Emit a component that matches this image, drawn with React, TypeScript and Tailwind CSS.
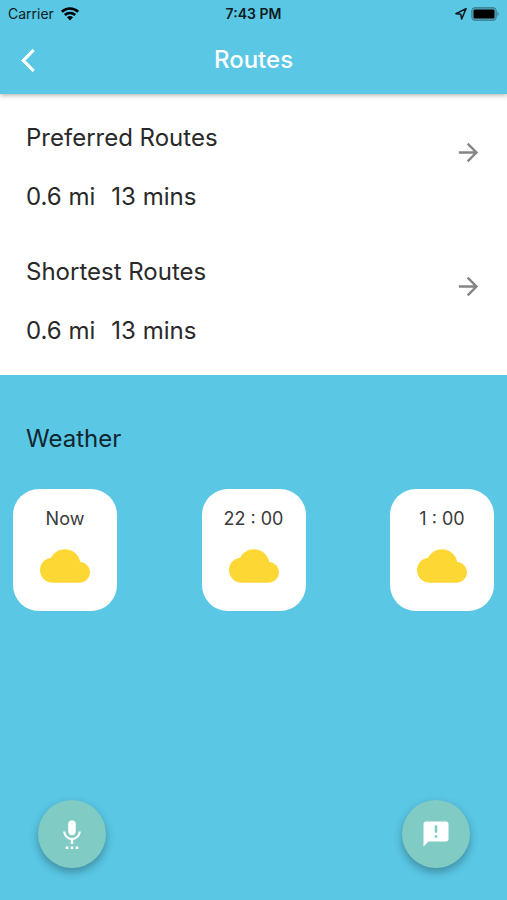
import React from "react";

const routes = [
  { name: "Preferred Routes", distance: "0.6 mi", time: "13 mins" },
  { name: "Shortest Routes", distance: "0.6 mi", time: "13 mins" },
];

const forecast = ["Now", "22 : 00", "1 : 00"];

function StatusBar() {
  return (
    <div className="grid h-7 grid-cols-3 items-center px-2 text-[#0b1c22]">
      <div className="flex items-center gap-1.5 text-sm">
        <span>Carrier</span>
        <svg className="h-3.5 w-5" viewBox="0 0 20 14" fill="none" aria-label="Wi-Fi">
          <path d="M1.8 4.8C6.500 .300 13.500 .300 18.200 4.800" stroke="#000" strokeWidth="2.600" />
          <path d="M4.800 8C7.700 5.300 12.300 5.300 15.200 8" stroke="#000" strokeWidth="2.500" />
          <path d="M7 10.300c1.700-1.600 4.300-1.600 6 0L10 13.400z" fill="#000" />
        </svg>
      </div>
      <div className="text-center text-sm font-semibold">7:43 PM</div>
      <div className="flex items-center justify-end gap-1">
        <svg className="h-3.5 w-3.5" viewBox="0 0 14 14" fill="none" aria-label="Location">
          <path
            d="M13 1.800 3 6.600l4.800.7.9 4.700z"
            stroke="#0b1c22"
            strokeWidth="1.600"
            strokeLinejoin="round"
          />
        </svg>
        <svg className="h-3.5 w-7" viewBox="0 0 28 14" aria-label="Battery">
          <rect x=".8" y=".8" width="24.400" height="12.400" rx="3.600" fill="#55a9c0" stroke="#3f8699" strokeWidth="1.400" />
          <rect x="2.500" y="2.600" width="21" height="8.800" rx="1.500" fill="#000" />
          <path d="M26.400 4.800c1.700.7 1.700 3.700 0 4.400z" fill="#3f8699" />
        </svg>
      </div>
    </div>
  );
}

function Header() {
  return (
    <header className="relative z-10 bg-[#5ac7e5] pb-0.5 shadow-[0_1px_5px_rgba(0,0,0,0.35)]">
      <StatusBar />
      <div className="grid h-16 grid-cols-[1fr_auto_1fr] items-center px-[21px]">
        <button type="button" aria-label="Back" className="w-fit text-white">
          <svg className="block h-[29px] w-3.5" viewBox="0 0 12 24" fill="currentColor">
            <path
              d="M11.400 3.870 9.900 2.400 .5 12l9.400 9.600 1.500-1.470L3.540 12z"
              stroke="currentColor"
              strokeWidth=".8"
            />
          </svg>
        </button>
        <h1 className="text-2xl font-medium text-white">Routes</h1>
      </div>
    </header>
  );
}

export default function App() {
  return (
    <div className="flex min-h-screen flex-col bg-[#5ac7e5] font-['Inter',sans-serif] text-[#292929]">
      <Header />
      <main>
        <section className="bg-white pt-[7px] pb-1.5">
          {routes.map((route) => (
            <button
              key={route.name}
              type="button"
              className="flex h-[134px] w-full items-start justify-between py-[21px] pr-6 pl-[26px] text-left text-2xl"
            >
              <span className="flex flex-col gap-[27px]">
                <span>{route.name}</span>
                <span className="flex gap-4">
                  <span>{route.distance}</span>
                  <span>{route.time}</span>
                </span>
              </span>
              <svg className="mt-4 size-[29px] text-[#858585]" viewBox="0 0 24 24" fill="currentColor">
                <path d="m12 4-1.410 1.410L16.170 11H4v2h12.170l-5.580 5.590L12 20l8-8z" />
              </svg>
            </button>
          ))}
        </section>
        <section className="pt-12">
          <h2 className="px-[26px] text-2xl text-[#10262e]">Weather</h2>
          <ul className="mt-[34px] flex justify-between px-[13px]">
            {forecast.map((label) => (
              <li
                key={label}
                className="flex w-[104px] flex-col items-center gap-2.5 rounded-[26px] bg-white pt-[18px] pb-5"
              >
                <span className="text-lg leading-6 text-[#3a3a3a]">{label}</span>
                <svg className="h-[50px] w-[50px]" viewBox="0 0 24 24" fill="#fdd835" aria-label="Cloudy">
                  <path d="M19.350 10.040C18.670 6.590 15.640 4 12 4 9.110 4 6.600 5.640 5.350 8.040 2.340 8.360 0 10.910 0 14c0 3.310 2.690 6 6 6h13c2.760 0 5-2.240 5-5 0-2.640-2.050-4.780-4.650-4.960z" />
                </svg>
              </li>
            ))}
          </ul>
        </section>
      </main>
      <footer className="mt-auto flex justify-between pr-[37px] pb-8 pl-[38px]">
        <button
          type="button"
          aria-label="Voice"
          className="flex size-[68px] items-center justify-center rounded-full bg-[#80cbc4] text-white shadow-[0_4px_8px_rgba(0,0,0,0.3)]"
        >
          <svg className="size-[30px]" viewBox="0 0 24 24" fill="currentColor">
            <path d="M7 24h2v-2H7v2zm5-11c1.660 0 2.990-1.340 2.990-3L15 4c0-1.660-1.340-3-3-3S9 2.340 9 4v6c0 1.660 1.340 3 3 3zm-1 11h2v-2h-2v2zm4 0h2v-2h-2v2zm4-14h-1.700c0 3-2.540 5.100-5.300 5.100S6.700 13 6.700 10H5c0 3.410 2.720 6.230 6 6.720V20h2v-3.280c3.280-.49 6-3.310 6-6.720z" />
          </svg>
        </button>
        <button
          type="button"
          aria-label="Feedback"
          className="flex size-[68px] items-center justify-center rounded-full bg-[#80cbc4] text-white shadow-[0_4px_8px_rgba(0,0,0,0.3)]"
        >
          <svg className="size-[30px]" viewBox="0 0 24 24" fill="currentColor">
            <path d="M20 2H4c-1.100 0-1.990.9-1.990 2L2 22l4-4h14c1.100 0 2-.9 2-2V4c0-1.100-.9-2-2-2zm-7 9h-2V5h2v6zm0 4h-2v-2h2v2z" />
          </svg>
        </button>
      </footer>
    </div>
  );
}
